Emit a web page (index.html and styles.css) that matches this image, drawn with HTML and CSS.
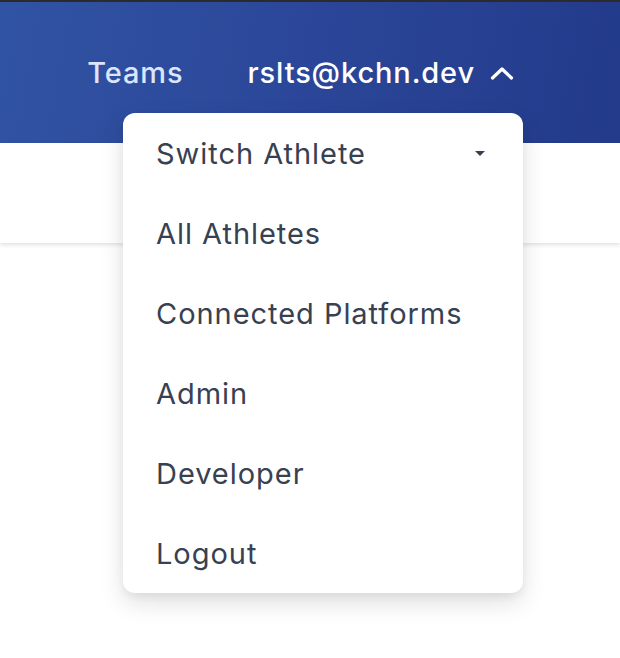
FILE: index.html
```html
<!DOCTYPE html>
<html lang="en">
<head>
    <meta charset="UTF-8">
    <meta name="viewport" content="width=device-width, initial-scale=1.0">
    <title>Athletes</title>
    <link rel="stylesheet" href="styles.css">
</head>
<body>
    <div class="page">
        <!-- top strip -->
        <div class="top-strip"></div>

        <!-- header -->
        <header class="site-header">
            <nav class="nav">
                <a class="nav-link" href="#">Teams</a>
                <a class="nav-user" href="#">
                    <span>rslts@kchn.dev</span>
                    <svg class="chevron" width="24" height="14" viewBox="0 0 24 14">
                        <path d="M2.5 12 L12 3 L21.5 12" fill="none" stroke="#fff" stroke-width="3.2" stroke-linecap="round" stroke-linejoin="round"/>
                    </svg>
                </a>
            </nav>
        </header>

        <!-- sub bar -->
        <div class="sub-bar"></div>

        <!-- user menu -->
        <div class="user-menu">
            <div class="menu-item menu-select">
                <span>Switch Athlete</span>
                <span class="caret"></span>
            </div>
            <a class="menu-item" href="#">All Athletes</a>
            <a class="menu-item" href="#">Connected Platforms</a>
            <a class="menu-item" href="#">Admin</a>
            <a class="menu-item" href="#">Developer</a>
            <a class="menu-item" href="#">Logout</a>
        </div>
    </div>
</body>
</html>
```

FILE: styles.css
```css
body {
    margin: 0;
    padding: 0;
    font-family: Inter, "Noto Sans", Arial, sans-serif;
    background: #fff;
}

.page {
    position: relative;
    min-height: 658px;
}

.top-strip {
    height: 2px;
    background: #2b2b2d;
}

.site-header {
    height: 141px;
    background: linear-gradient(100deg, #3153a3 0%, #2b4698 50%, #233a8a 100%);
}

.nav {
    display: flex;
    justify-content: flex-end;
    align-items: center;
    height: 100%;
    padding-right: 106px;
}

.nav a {
    text-decoration: none;
    font-size: 29px;
    font-weight: 500;
    letter-spacing: 0.03em;
}

.nav-link {
    color: #dbe5fb;
    margin-right: 64px;
}

.nav-user {
    display: flex;
    align-items: center;
    color: #fff;
}

.chevron {
    margin-left: 15px;
}

.sub-bar {
    height: 100px;
    background: #fff;
    box-shadow: 0 2px 4px rgba(0, 0, 0, 0.12);
}

.user-menu {
    position: absolute;
    top: 113px;
    left: 123px;
    width: 400px;
    background: #fff;
    border-radius: 12px;
    box-shadow: 0 10px 25px rgba(0, 0, 0, 0.12), 0 4px 8px rgba(0, 0, 0, 0.05);
    display: flex;
    flex-direction: column;
}

.menu-item {
    display: flex;
    align-items: center;
    justify-content: space-between;
    height: 80px;
    padding: 0 38px 0 33px;
    font-size: 29px;
    letter-spacing: 0.033em;
    color: #374151;
    text-decoration: none;
}

.caret {
    width: 0;
    height: 0;
    border-left: 5px solid transparent;
    border-right: 5px solid transparent;
    border-top: 5px solid #374151;
}
```
